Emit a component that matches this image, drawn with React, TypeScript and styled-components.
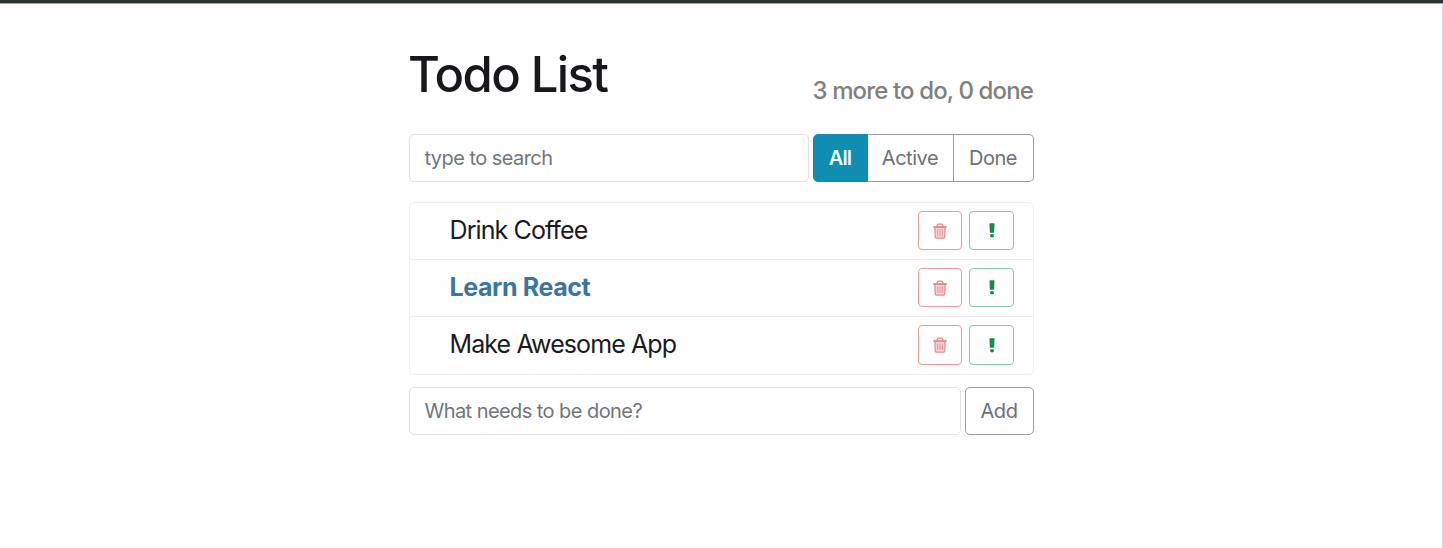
import React, { useState } from 'react';
import styled, { createGlobalStyle, css } from 'styled-components';

const GlobalStyle = createGlobalStyle`
  *, *::before, *::after { box-sizing: border-box; }
  html { height: 100%; }
  body {
    margin: 0;
    min-height: 100%;
    overflow: hidden;
    background: #fefefe;
    color: #17181c;
    font-family: Inter, "Liberation Sans", sans-serif;
  }
  button, input { font: inherit; margin: 0; }
`;

const Page = styled.div`
  height: 548px;
  border-top: 3px solid #2d3034;
  box-shadow: inset 0 1px 0 #a5a5a7, inset -1px 0 0 #d9d9db;
  padding-left: 409px;
`;

const TodoApp = styled.main`
  width: 625px;
  display: flex;
  flex-direction: column;
`;

const Header = styled.header`
  height: 131px;
  display: flex;
  justify-content: space-between;
`;

const Title = styled.h1`
  margin: 42px 0 0 -1px;
  font-size: 49px;
  line-height: 60px;
  font-weight: 500;
  letter-spacing: -1.6px;
  white-space: nowrap;
`;

const Summary = styled.h2`
  margin: 73px 1px 0 0;
  font-size: 24px;
  line-height: 30px;
  font-weight: 500;
  letter-spacing: -0.87px;
  color: #808080;
  white-space: nowrap;
`;

const Bar = styled.div`
  display: flex;
  gap: 4px;
  height: 48px;
`;

const TextField = styled.input`
  flex: 1;
  min-width: 0;
  padding: 0 15px 0 14.5px;
  border: 1px solid #dfe1e7;
  border-radius: 5px;
  background: #fff;
  color: #495057;
  font-size: 20px;
  letter-spacing: -0.56px;
  outline: none;
  &::placeholder { color: #6f767e; opacity: 1; }
`;

const buttonBase = css`
  padding: 0 1px 0 0;
  border: 1px solid #9a9da3;
  background: #fff;
  color: #6b7179;
  font-size: 20px;
  letter-spacing: -0.45px;
`;

const FilterGroup = styled.div`
  display: flex;
`;

const FilterButton = styled.button<{ $active: boolean; $width: number }>`
  ${buttonBase}
  width: ${p => p.$width}px;
  &:first-child { border-radius: 5px 0 0 5px; }
  &:last-child { border-radius: 0 5px 5px 0; }
  & + & { border-left-width: 0; }
  ${p => p.$active && css`
    background: #0f8db3;
    border-color: #0f8db3;
    color: #e9fbff;
    font-weight: 600;
    letter-spacing: -0.8px;
  `}
`;

const AddButton = styled.button`
  ${buttonBase}
  width: 69px;
  border-radius: 5px;
`;

const List = styled.ul`
  margin: 20px 0 12px;
  padding: 0;
  height: 173px;
  list-style: none;
  border: 1px solid #efeff0;
  border-radius: 5px;
`;

const Item = styled.li`
  height: 57px;
  display: flex;
  align-items: flex-start;
  gap: 7px;
  padding: 8px 19px 0 39.5px;
  &:first-child { height: 56px; }
  & + & { border-top: 1px solid #ebebed; }
`;

const Label = styled.span<{ $important?: boolean }>`
  flex: 1;
  font-size: 25px;
  line-height: 39px;
  letter-spacing: ${p => (p.$important ? -0.4 : -0.9)}px;
  color: ${p => (p.$important ? '#3b74a5' : '#1d1a1f')};
  font-weight: ${p => (p.$important ? 700 : 400)};
`;

const IconButton = styled.button<{ $tone: 'danger' | 'success' }>`
  display: flex;
  align-items: center;
  justify-content: center;
  width: ${p => (p.$tone === 'danger' ? 44 : 45)}px;
  height: 39px;
  padding: 0;
  border: 1px solid ${p => (p.$tone === 'danger' ? '#e79ca0' : '#8fc6a1')};
  border-radius: 4px;
  background: #fff;
  color: ${p => (p.$tone === 'danger' ? '#e5868a' : '#198a48')};
  ${Item}:last-child & { height: 40px; }
`;

const TrashIcon = () => (
  <svg width="14" height="16" viewBox="0 0 14 16" fill="none" stroke="currentColor">
    <path d="M0.3 4H13.7" strokeWidth="1.7" />
    <path d="M3.6 3.6L5 1.2H9L10.4 3.6" strokeWidth="1.3" />
    <path d="M1.9 4.5L2.2 13.9Q2.3 15.1 3.4 15.1H10.6Q11.7 15.1 11.8 13.9L12.1 4.5Z" fill="#f9d5d7" strokeWidth="1.2" />
    <path d="M4.7 6.5V13M7 6.5V13M9.3 6.5V13" strokeWidth="0.9" />
  </svg>
);

const ExclamationIcon = () => (
  <svg width="6" height="15" viewBox="0 0 6 15" fill="currentColor">
    <path d="M1 0.3H5Q5.6 0.3 5.5 1L5.2 9Q5.2 9.8 4.4 9.8H1.6Q0.8 9.8 0.8 9L0.5 1Q0.4 0.3 1 0.3Z" />
    <ellipse cx="3" cy="12.8" rx="2.1" ry="1.8" />
  </svg>
);

const todos = [
  { id: 1, label: 'Drink Coffee', important: false },
  { id: 2, label: 'Learn React', important: true },
  { id: 3, label: 'Make Awesome App', important: false },
];

const filters = [
  { name: 'All', width: 55 },
  { name: 'Active', width: 86 },
  { name: 'Done', width: 80 },
];

export default function App() {
  const [filter, setFilter] = useState('All');
  return (
    <Page>
      <GlobalStyle />
      <TodoApp>
        <Header>
          <Title>Todo List</Title>
          <Summary>3 more to do, 0 done</Summary>
        </Header>
        <Bar>
          <TextField placeholder="type to search" />
          <FilterGroup>
            {filters.map(f => (
              <FilterButton key={f.name} $width={f.width} $active={f.name === filter} onClick={() => setFilter(f.name)}>
                {f.name}
              </FilterButton>
            ))}
          </FilterGroup>
        </Bar>
        <List>
          {todos.map(t => (
            <Item key={t.id}>
              <Label $important={t.important}>{t.label}</Label>
              <IconButton $tone="danger" aria-label="Delete"><TrashIcon /></IconButton>
              <IconButton $tone="success" aria-label="Important"><ExclamationIcon /></IconButton>
            </Item>
          ))}
        </List>
        <Bar>
          <TextField placeholder="What needs to be done?" />
          <AddButton>Add</AddButton>
        </Bar>
      </TodoApp>
    </Page>
  );
}
